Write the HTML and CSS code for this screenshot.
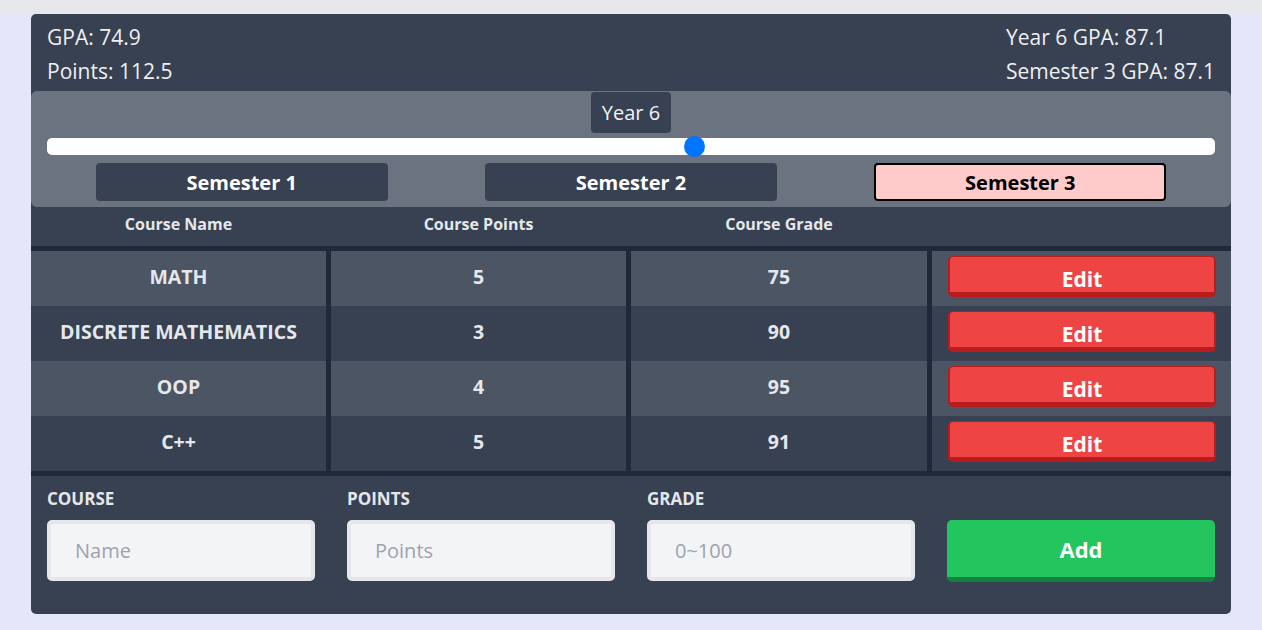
FILE: index.html
```html
<!DOCTYPE html>
<html lang="en">
<head>
<meta charset="utf-8">
<title>GPA Calculator</title>
<link rel="stylesheet" href="styles.css">
</head>
<body>
<div class="topbar"></div>
<main class="page">
  <section class="card">
    <header class="summary">
      <div class="summary-col">
        <p>GPA: 74.9</p>
        <p>Points: 112.5</p>
      </div>
      <div class="summary-col">
        <p>Year 6 GPA: 87.1</p>
        <p>Semester 3 GPA: 87.1</p>
      </div>
    </header>

    <div class="picker">
      <div class="year-badge">Year 6</div>
      <div class="track">
        <span class="thumb" style="left: calc((100% - 21px) * 5 / 9);"></span>
      </div>
      <div class="semesters">
        <div class="sem-cell"><button class="sem-btn">Semester 1</button></div>
        <div class="sem-cell"><button class="sem-btn">Semester 2</button></div>
        <div class="sem-cell"><button class="sem-btn active">Semester 3</button></div>
      </div>
    </div>

    <div class="table-head">
      <div class="th">Course Name</div>
      <div class="th">Course Points</div>
      <div class="th">Course Grade</div>
      <div class="th"></div>
    </div>

    <div class="table-body">
      <div class="td odd">MATH</div>
      <div class="td odd">5</div>
      <div class="td odd">75</div>
      <div class="td odd action"><button class="edit-btn">Edit</button></div>

      <div class="td even">DISCRETE MATHEMATICS</div>
      <div class="td even">3</div>
      <div class="td even">90</div>
      <div class="td even action"><button class="edit-btn">Edit</button></div>

      <div class="td odd">OOP</div>
      <div class="td odd">4</div>
      <div class="td odd">95</div>
      <div class="td odd action"><button class="edit-btn">Edit</button></div>

      <div class="td even">C++</div>
      <div class="td even">5</div>
      <div class="td even">91</div>
      <div class="td even action"><button class="edit-btn">Edit</button></div>
    </div>

    <form class="add-form">
      <label class="field">
        <span class="field-label">COURSE</span>
        <input class="field-input" type="text" placeholder="Name">
      </label>
      <label class="field">
        <span class="field-label">POINTS</span>
        <input class="field-input" type="text" placeholder="Points">
      </label>
      <label class="field">
        <span class="field-label">GRADE</span>
        <input class="field-input" type="text" placeholder="0~100">
      </label>
      <div class="field field-end">
        <button type="button" class="add-btn">Add</button>
      </div>
    </form>
  </section>
</main>
</body>
</html>
```

FILE: styles.css
```css
* {
  box-sizing: border-box;
}

html, body {
  margin: 0;
  padding: 0;
}

body {
  background: #e6e6fa;
  font-family: "Open Sans", "Noto Sans", sans-serif;
  color: #e5e7eb;
  min-height: 630px;
}

.topbar {
  height: 13px;
  background: #e5e7eb;
}

.page {
  padding-top: 1px;
  display: flex;
  justify-content: center;
}

.card {
  width: 1200px;
  background: #374151;
  border-radius: 5px;
}

.summary {
  display: flex;
  justify-content: space-between;
  padding: 6px 16px 3px;
  color: #eef0f3;
}

.summary p {
  margin: 0;
  font-size: 21px;
  line-height: 34px;
}

.picker {
  background: #6b7280;
  border-radius: 6px;
  padding: 1px 16px 6px;
  display: flex;
  flex-direction: column;
  align-items: center;
}

.year-badge {
  background: #374151;
  border-radius: 4px;
  height: 41px;
  padding: 0 11px;
  font-size: 20px;
  line-height: 41px;
  color: #f3f4f6;
}

.track {
  position: relative;
  width: 100%;
  height: 17px;
  margin-top: 5px;
  background: #ffffff;
  border-radius: 5px;
}

.thumb {
  position: absolute;
  top: -2px;
  width: 21px;
  height: 21px;
  border-radius: 50%;
  background: #0075ff;
}

.semesters {
  width: 100%;
  margin-top: 8px;
  display: grid;
  grid-template-columns: repeat(3, 1fr);
}

.sem-cell {
  display: flex;
  justify-content: center;
}

.sem-btn {
  width: 75%;
  height: 38px;
  background: #374151;
  border: 2px solid #374151;
  border-radius: 4px;
  color: #ffffff;
  font-family: inherit;
  font-weight: 700;
  font-size: 20px;
  padding: 0;
}

.sem-btn.active {
  background: #fecaca;
  border-color: #000000;
  color: #000000;
}

.table-head {
  display: grid;
  grid-template-columns: 295px 295px 296px 1fr;
  column-gap: 5px;
  height: 39px;
}

.th {
  display: flex;
  align-items: center;
  justify-content: center;
  font-size: 16px;
  font-weight: 700;
  padding-bottom: 5px;
}

.table-body {
  display: grid;
  grid-template-columns: 295px 295px 296px 1fr;
  column-gap: 5px;
  background: #1f2937;
  padding: 5px 0;
}

.td {
  height: 55px;
  display: flex;
  align-items: center;
  justify-content: center;
  font-size: 19.5px;
  font-weight: 700;
  padding-bottom: 4px;
}

.td.odd {
  background: #4b5563;
}

.td.even {
  background: #374151;
}

.td.action {
  padding: 5px 15px 9px 16px;
  align-items: stretch;
}

.edit-btn {
  width: 100%;
  background: #ef4444;
  border-style: solid;
  border-color: #b91c1c;
  border-width: 1px 2px 5px 2px;
  border-radius: 5px;
  color: #ffffff;
  font-family: inherit;
  font-weight: 700;
  font-size: 21px;
  line-height: 1;
  padding: 10px 0 0;
}

.add-form {
  display: grid;
  grid-template-columns: repeat(4, 1fr);
  column-gap: 32px;
  padding: 12px 16px 32px;
}

.field {
  display: flex;
  flex-direction: column;
}

.field-label {
  font-size: 17px;
  font-weight: 700;
  line-height: 22px;
  margin-bottom: 10px;
  color: #e5e7eb;
}

.field-input {
  height: 61px;
  width: 100%;
  background: #f3f4f6;
  border: 4px solid #e5e7eb;
  border-radius: 5px;
  padding: 0 24px;
  font-family: inherit;
  font-size: 20px;
  color: #111827;
  outline: none;
}

.field-input::placeholder {
  color: #9ca3af;
}

.field-end {
  padding-top: 32px;
}

.add-btn {
  height: 62px;
  width: 100%;
  background: #22c55e;
  border: none;
  border-bottom: 5px solid #15803d;
  border-radius: 5px;
  color: #ffffff;
  font-family: inherit;
  font-weight: 700;
  font-size: 22px;
  padding: 0;
}
```
